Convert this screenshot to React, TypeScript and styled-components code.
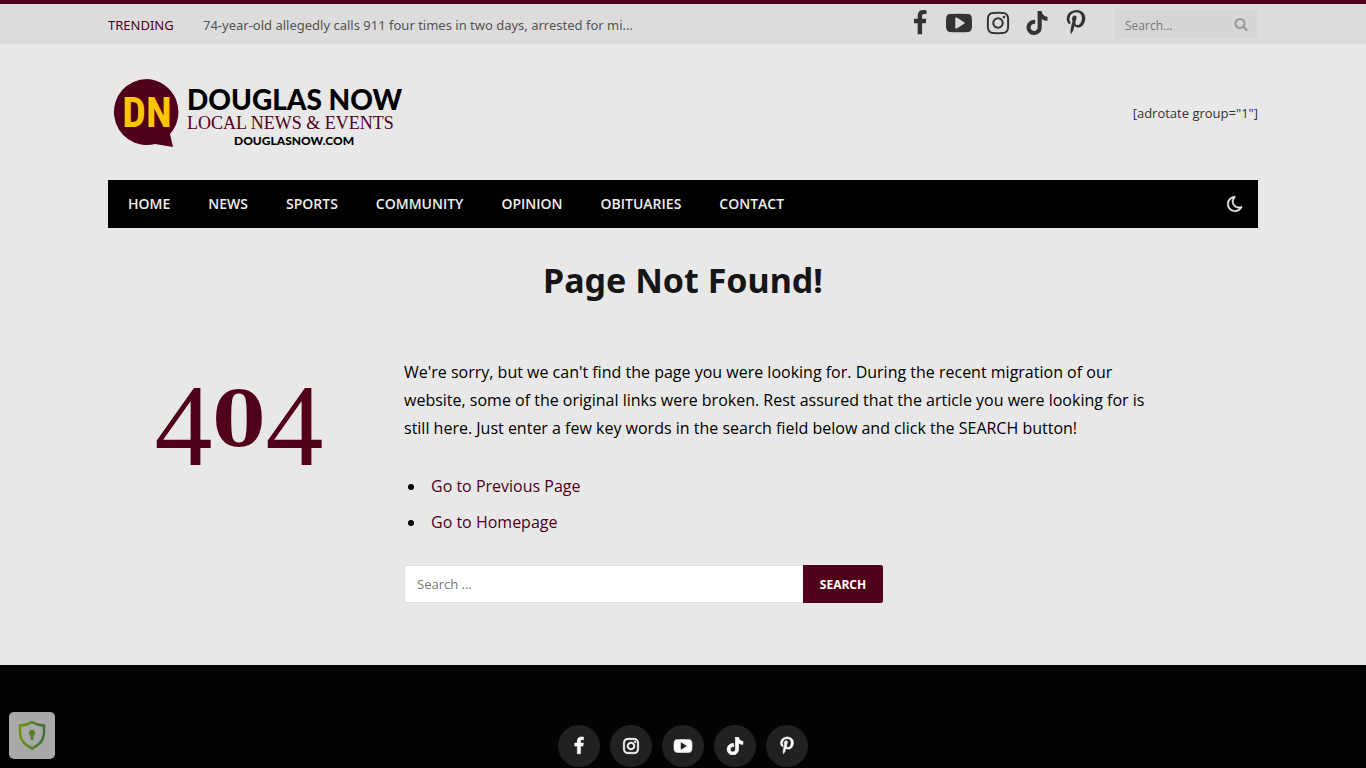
import React from "react";
import styled, { createGlobalStyle } from "styled-components";
import { FaTiktok } from "react-icons/fa";

const maroon = "#50001a";
const ui = `"Noto Sans", "Open Sans", sans-serif`;

const GlobalStyle = createGlobalStyle`
  *, *::before, *::after { box-sizing: border-box; }
  body {
    margin: 0;
    background: #e8e8e8;
    color: #161616;
    font-family: "Open Sans", "Noto Sans", sans-serif;
    font-size: 13px;
  }
  a { color: inherit; text-decoration: none; }
  button, input { font-family: inherit; }
`;

const Page = styled.div`
  display: flex;
  flex-direction: column;
  min-height: 100vh;
`;

const Wrap = styled.div`
  width: calc(100% - 48px);
  max-width: 1150px;
  margin: 0 auto;
`;

const TopBar = styled.div`
  border-top: 4px solid ${maroon};
  background: #dcdcdc;
`;

const TopBarInner = styled(Wrap)`
  display: flex;
  align-items: center;
  height: 40px;
`;

const TrendingLabel = styled.span`
  width: 95px;
  flex: none;
  padding-top: 2px;
  color: ${maroon};
  font-family: ${ui};
`;

const TrendingLink = styled.a`
  margin-right: auto;
  padding-top: 2px;
  color: #555;
  font-family: ${ui};
  white-space: nowrap;
  overflow: hidden;
  text-overflow: ellipsis;
`;

const TopSocial = styled.div`
  display: flex;
  align-items: center;
  height: 38px;
  align-self: flex-start;
  gap: 11px;
  margin-right: 25px;
`;

const TopSocialLink = styled.a`
  display: flex;
  justify-content: center;
  width: 28px;
  color: #333;
`;

const TopSearch = styled.form`
  display: flex;
  align-items: center;
  width: 143px;
  height: 30px;
  padding: 0 10px;
  background: #d6d6d6;
`;

const TopSearchInput = styled.input`
  flex: 1;
  min-width: 0;
  padding: 2px 0 0;
  border: 0;
  outline: 0;
  background: transparent;
  font-size: 12px;
  &::placeholder { color: #777; opacity: 1; }
`;

const IconButton = styled.button`
  display: flex;
  padding: 0;
  border: 0;
  background: transparent;
  color: inherit;
  cursor: pointer;
`;

const SearchIconButton = styled(IconButton)`
  color: #999;
`;

const Header = styled(Wrap)`
  display: flex;
  align-items: center;
  justify-content: space-between;
  height: 136px;
`;

const LogoLink = styled.a`
  display: flex;
`;

const AdText = styled.div`
  padding-top: 2px;
  color: #333;
`;

const Nav = styled.nav`
  display: flex;
  align-items: center;
  height: 48px;
  padding: 0 14px 0 20px;
  background: #000;
  color: #efefef;
`;

const NavList = styled.ul`
  display: flex;
  gap: 38px;
  margin: 0 auto 0 0;
  padding: 0 0 2px;
  list-style: none;
  font-size: 14px;
  font-weight: 600;
`;

const Title = styled.h1`
  margin: 27px 0 0;
  font-family: ${ui};
  font-size: 34px;
  line-height: 50px;
  font-weight: 700;
  text-align: center;
`;

const Content = styled.main`
  display: grid;
  grid-template-columns: 262px minmax(0, 746px);
  column-gap: 34px;
  padding: 53px 0 62px;
`;

const ErrorCode = styled.div`
  display: flex;
  justify-content: center;
  align-items: flex-start;
  padding-top: 18px;
  color: ${maroon};
  line-height: 100px;
`;

const TallDigit = styled.span`
  font-family: "Liberation Serif", serif;
  font-size: 116px;
`;

const RoundDigit = styled.span`
  font-family: "DejaVu Serif", serif;
  font-size: 76px;
  font-weight: 700;
  line-height: 88px;
`;

const Message = styled.p`
  margin: 0;
  font-size: 16px;
  line-height: 28px;
  color: #000;
`;

const Links = styled.ul`
  display: grid;
  gap: 8px;
  margin: 30px 0 0;
  padding-left: 22px;
  font-size: 16px;
  line-height: 28px;
  color: #000;
  li { padding-left: 5px; }
  a { color: ${maroon}; }
`;

const SearchForm = styled.form`
  display: flex;
  width: 100%;
  max-width: 479px;
  height: 38px;
  margin-top: 29px;
`;

const SearchInput = styled.input`
  flex: 1;
  min-width: 0;
  padding: 0 12px;
  border: 1px solid #dedede;
  border-right: 0;
  border-radius: 2px 0 0 2px;
  background: #fff;
  font-size: 13px;
  &::placeholder { color: #777; opacity: 1; }
`;

const SearchButton = styled.button`
  width: 80px;
  padding: 0;
  border: 0;
  border-radius: 0 2px 2px 0;
  background: ${maroon};
  color: #fff;
  font-size: 12px;
  font-weight: 700;
  cursor: pointer;
`;

const Footer = styled.footer`
  display: flex;
  flex: 1;
  align-items: flex-start;
  justify-content: center;
  gap: 10px;
  padding-top: 60px;
  background: #030303;
`;

const FooterLink = styled.a`
  display: flex;
  align-items: center;
  justify-content: center;
  width: 42px;
  height: 42px;
  border-radius: 50%;
  background: #212121;
  color: #fff;
`;

const PrivacyButton = styled.button`
  position: fixed;
  left: 9px;
  bottom: 9px;
  display: flex;
  align-items: center;
  justify-content: center;
  width: 46px;
  height: 47px;
  padding: 0;
  border: 0;
  border-radius: 5px;
  background: #a9a9a9;
  cursor: pointer;
`;

const paths = {
  facebook:
    "M1343 12v264h-157q-86 0-116 36t-30 108v189h293l-39 296h-254v759h-306v-759h-255v-296h255v-218q0-186 104-288.5t277-102.5q147 0 228 12z",
  youtube:
    "M1280 896q0-37-30-54l-512-320q-31-20-65-2-33 18-33 56v640q0 38 33 56 16 8 31 8 20 0 34-10l512-320q30-17 30-54zm512 0q0 96-1 150t-8.5 136.5-22.5 147.5q-16 73-69 123t-124 58q-222 25-671 25t-671-25q-71-8-124.5-58t-69.5-123q-14-65-21.5-147.5t-8.5-136.5-1-150 1-150 8.5-136.5 22.5-147.5q16-73 69-123t124-58q222-25 671-25t671 25q71 8 124.5 58t69.5 123q14 65 21.5 147.5t8.5 136.5 1 150z",
  instagram:
    "M1152 896q0-106-75-181t-181-75-181 75-75 181 75 181 181 75 181-75 75-181zm138 0q0 164-115 279t-279 115-279-115-115-279 115-279 279-115 279 115 115 279zm108-410q0 38-27 65t-65 27-65-27-27-65 27-65 65-27 65 27 27 65zm-502-220q-7 0-76.5-.5t-105.5 0-96.5 3-103 10-71.5 18.5q-50 20-88 58t-58 88q-11 29-18.5 71.5t-10 103-3 96.5 0 105.5.5 76.5-.5 76.5 0 105.5 3 96.5 10 103 18.5 71.5q20 50 58 88t88 58q29 11 71.5 18.5t103 10 96.5 3 105.5 0 76.5-.5 76.5.5 105.5 0 96.5-3 103-10 71.5-18.5q50-20 88-58t58-88q11-29 18.5-71.5t10-103 3-96.5 0-105.5-.5-76.5.5-76.5 0-105.5-3-96.5-10-103-18.5-71.5q-20-50-58-88t-88-58q-29-11-71.5-18.5t-103-10-96.5-3-105.5 0-76.5.5zm768 630q0 229-5 317-10 208-124 322t-322 124q-88 5-317 5t-317-5q-208-10-322-124t-124-322q-5-88-5-317t5-317q10-208 124-322t322-124q88-5 317-5t317 5q208 10 322 124t124 322q5 88 5 317z",
  pinterest:
    "M256 597q0-108 37.5-203.5t103.5-166.5 152-123 185-78 202-26q158 0 294 66.5t221 193.5 85 287q0 96-19 188t-60 177-100 149.5-145 103-189 38.5q-68 0-135-32t-96-88q-10 39-28 112.5t-23.5 95-20.5 71-26 71-32 62.5-46 77.5-62 86.5l-14 5-9-10q-15-157-15-188 0-92 21.5-206.5t66.5-287.5 52-203q-32-65-32-169 0-83 52-156t132-73q61 0 95 40.5t34 102.5q0 66-44 191t-44 187q0 63 45 104.5t109 41.5q55 0 102-25t78.5-68 56-95 38-110.5 20-111 6.5-99.5q0-173-109.5-269.5t-285.5-96.5q-200 0-334 129.5t-134 328.5q0 44 12.5 85t27 65 27 45.5 12.5 30.5q0 28-15 73t-37 45q-2 0-17-3-51-15-90.5-56t-61-94.5-32.5-108-11-106.5z",
  search:
    "M1216 832q0-185-131.5-316.5t-316.5-131.5-316.5 131.5-131.5 316.5 131.5 316.5 316.5 131.5 316.5-131.5 131.5-316.5zm512 832q0 52-38 90t-90 38q-54 0-90-38l-343-342q-179 124-399 124-143 0-273.5-55.5t-225-150-150-225-55.5-273.5 55.5-273.5 150-225 225-150 273.5-55.5 273.5 55.5 225 150 150 225 55.5 273.5q0 220-124 399l343 343q37 37 37 90z",
  moon:
    "M1390 1303q-54 9-110 9-182 0-337-90t-245-245-90-337q0-192 104-357-201 60-328.5 229t-127.5 384q0 130 51 248.5t136.5 204 204 136.5 248.5 51q144 0 273.5-61.5t220.5-171.5zm203-85q-94 203-283.5 324.5t-413.5 121.5q-156 0-298-61t-245-164-164-245-61-298q0-153 57.5-292.5t156-241.5 235.5-164.5 290-68.5q44-2 61 39 18 41-15 72-86 78-131.5 181.5t-45.5 218.5q0 148 73 273t198 198 273 73q118 0 228-51 41-18 72 13 14 14 17.5 34t-4.5 38z",
};

type GlyphName = keyof typeof paths;

function Glyph({ name, size, weight = 0 }: { name: GlyphName; size: number; weight?: number }) {
  return (
    <svg
      width={size}
      height={size}
      viewBox="0 0 1792 1792"
      fill="currentColor"
      stroke="currentColor"
      strokeWidth={weight}
      overflow="visible"
      aria-hidden="true"
    >
      <path d={paths[name]} />
    </svg>
  );
}

function SocialIcon({ name, size, weight }: { name: string; size: number; weight?: number }) {
  return name === "tiktok" ? (
    <FaTiktok size={weight ? size : size - 2} stroke="currentColor" strokeWidth={weight ? 20 : 0} />
  ) : (
    <Glyph name={name as GlyphName} size={size} weight={weight} />
  );
}

function Logo() {
  return (
    <svg width="300" height="80" viewBox="0 0 300 80" role="img" aria-label="Douglas Now">
      <path d="M39 7a33 33 0 1 0 8 65l18 3-3-13A33 33 0 0 0 39 7z" fill={maroon} />
      <text x="39" y="55" textAnchor="middle" fontFamily="Roboto Condensed, Liberation Sans Narrow, Roboto, sans-serif" fontWeight="700" fontSize="42" fill="#fdc500">DN</text>
      <text x="79" y="38" fontFamily="Lato, sans-serif" fontWeight="900" fontSize="28" fill="#000">DOUGLAS NOW</text>
      <text x="79" y="57" fontFamily="Liberation Serif, serif" fontSize="18" fill={maroon}>LOCAL NEWS &amp; EVENTS</text>
      <text x="126" y="73" fontFamily="Lato, sans-serif" fontWeight="900" fontSize="12" fill="#000">DOUGLASNOW.COM</text>
    </svg>
  );
}

const topSocials = ["facebook", "youtube", "instagram", "tiktok", "pinterest"];
const footerSocials = ["facebook", "instagram", "youtube", "tiktok", "pinterest"];
const menu = ["Home", "News", "Sports", "Community", "Opinion", "Obituaries", "Contact"];

export default function App() {
  return (
    <Page>
      <GlobalStyle />
      <TopBar>
        <TopBarInner>
          <TrendingLabel>TRENDING</TrendingLabel>
          <TrendingLink href="#">74-year-old allegedly calls 911 four times in two days, arrested for mi...</TrendingLink>
          <TopSocial>
            {topSocials.map((s) => (
              <TopSocialLink key={s} href="#" aria-label={s}>
                <SocialIcon name={s} size={26} />
              </TopSocialLink>
            ))}
          </TopSocial>
          <TopSearch>
            <TopSearchInput type="text" aria-label="Search" placeholder="Search..." />
            <SearchIconButton type="button" aria-label="Submit search">
              <Glyph name="search" size={14} />
            </SearchIconButton>
          </TopSearch>
        </TopBarInner>
      </TopBar>

      <Header as="header">
        <LogoLink href="#" aria-label="Douglas Now home"><Logo /></LogoLink>
        <AdText>[adrotate group="1"]</AdText>
      </Header>

      <Wrap>
        <Nav>
          <NavList>
            {menu.map((m) => (
              <li key={m}><a href="#">{m.toUpperCase()}</a></li>
            ))}
          </NavList>
          <IconButton type="button" aria-label="Switch to dark mode">
            <Glyph name="moon" size={18} weight={60} />
          </IconButton>
        </Nav>
        <Title>Page Not Found!</Title>
        <Content>
          <ErrorCode>
            <TallDigit>4</TallDigit><RoundDigit>0</RoundDigit><TallDigit>4</TallDigit>
          </ErrorCode>
          <div>
            <Message>
              We're sorry, but we can't find the page you were looking for. During the recent migration of our
              website, some of the original links were broken. Rest assured that the article you were looking for is
              still here. Just enter a few key words in the search field below and click the SEARCH button!
            </Message>
            <Links>
              <li><a href="#">Go to Previous Page</a></li>
              <li><a href="#">Go to Homepage</a></li>
            </Links>
            <SearchForm>
              <SearchInput type="text" aria-label="Search for" placeholder="Search ..." />
              <SearchButton type="button">SEARCH</SearchButton>
            </SearchForm>
          </div>
        </Content>
      </Wrap>

      <Footer>
        {footerSocials.map((s) => (
          <FooterLink key={s} href="#" aria-label={s}>
            <SocialIcon name={s} size={18} weight={60} />
          </FooterLink>
        ))}
      </Footer>

      <PrivacyButton type="button" aria-label="Privacy settings">
        <svg width="28" height="34" viewBox="0 0 28 32" aria-hidden="true">
          <defs>
            <linearGradient id="shield" x1="0" x2="1">
              <stop offset="0" stopColor="#6f930f" />
              <stop offset="1" stopColor="#3f7040" />
            </linearGradient>
          </defs>
          <path d="M14 2C10 4.500 6 5.500 2 5.500V13c0 7 4.500 12 12 15.500C21.500 25 26 20 26 13V5.500C22 5.500 18 4.500 14 2z" fill="none" stroke="url(#shield)" strokeWidth="2.500" />
          <circle cx="14" cy="13" r="3" fill="#557f2c" />
          <path d="M12.500 14h3v6h-3z" fill="#557f2c" />
        </svg>
      </PrivacyButton>
    </Page>
  );
}
